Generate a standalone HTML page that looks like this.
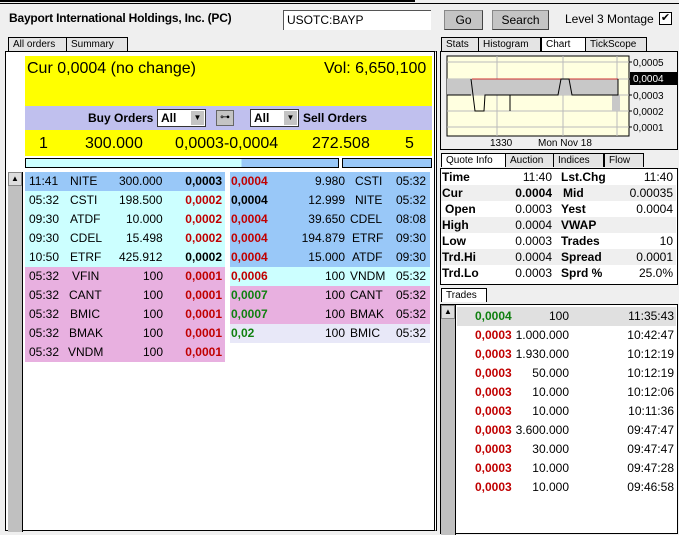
<!DOCTYPE html>
<html><head><meta charset="utf-8"><style>
*{margin:0;padding:0;box-sizing:border-box}
body{width:679px;height:528px;overflow:hidden;background:#efefef;font-family:"Liberation Sans",sans-serif;font-size:12px;color:#000;position:relative}
.a{position:absolute;white-space:nowrap}
.tab{position:absolute;height:14px;border:1px solid #000;border-bottom:none;background:#e4e4e4;font-size:10px;line-height:13px;padding-left:4px;overflow:hidden}
.row{position:absolute;height:19px;font-size:12px;line-height:19px}
.row span{position:absolute}
.r{color:#c00000;font-weight:bold}
.g{color:#108010;font-weight:bold}
.b{font-weight:bold}
.btn{position:absolute;background:#c4c4c4;border:1px solid #888;border-right-color:#444;border-bottom-color:#444;text-align:center;font-size:12px;line-height:18px}
.q{position:absolute;left:441px;width:235px;height:16px;font-size:12px;line-height:16px}
.q span{position:absolute}
.q .l{font-weight:bold;left:1px}
.tr{position:absolute;left:457px;width:219px;height:19px;line-height:19px}
.tr span{position:absolute}
</style></head><body>
<div class="a" style="left:0;top:0;width:415px;height:2px;background:#000"></div>
<div class="a" style="left:0;top:3px;width:679px;height:1px;background:#000"></div>
<div class="a b" style="left:9px;top:11px;font-size:12px;letter-spacing:-0.2px">Bayport International Holdings, Inc. (PC)</div>
<div class="a" style="left:283px;top:10px;width:148px;height:20px;background:#fff;border-top:1px solid #555;border-left:1px solid #555;padding-left:3px;line-height:18px">USOTC:BAYP</div>
<div class="btn" style="left:444px;top:10px;width:39px;height:20px">Go</div>
<div class="btn" style="left:492px;top:10px;width:57px;height:20px">Search</div>
<div class="a" style="left:565px;top:12px">Level 3 Montage</div>
<div class="a" style="left:659px;top:12px;width:13px;height:13px;background:#fff;border:1px solid #000;font-size:11px;line-height:11px;text-align:center">✔</div>

<div class="tab" style="left:8px;top:37px;width:60px">All orders</div>
<div class="tab" style="left:66px;top:37px;width:62px">Summary</div>
<div class="a" style="left:5px;top:51px;width:432px;height:480px;border:1px solid #000;background:#fff;border-right:3px double #000"></div>
<div class="a" style="left:25px;top:56px;width:407px;height:50px;background:#ffff00"></div>
<div class="a" style="left:27px;top:60px;font-size:16px">Cur 0,0004 (no change)</div>
<div class="a" style="left:324px;top:60px;font-size:16px">Vol: 6,650,100</div>
<div class="a" style="left:25px;top:106px;width:407px;height:24px;background:#c0c0ee"></div>
<div class="a b" style="left:88px;top:111px">Buy Orders</div>
<div class="a b" style="left:157px;top:109px;width:49px;height:18px;background:#fff;border:1px solid #333;padding-left:3px;line-height:16px">All<span style="position:absolute;right:1px;top:1px;width:13px;height:14px;background:#c4c4c4;font-size:8px;line-height:14px;text-align:center">▼</span></div>
<div class="a" style="left:216px;top:110px;width:18px;height:16px;background:#c4c4c4;border:1px solid #666;font-size:10px;line-height:14px;text-align:center">⊶</div>
<div class="a b" style="left:250px;top:109px;width:49px;height:18px;background:#fff;border:1px solid #333;padding-left:3px;line-height:16px">All<span style="position:absolute;right:1px;top:1px;width:13px;height:14px;background:#c4c4c4;font-size:8px;line-height:14px;text-align:center">▼</span></div>
<div class="a b" style="left:303px;top:111px">Sell Orders</div>
<div class="a" style="left:25px;top:130px;width:407px;height:26px;background:#ffff00;font-size:16px;line-height:28px">
<span class="a" style="left:14px">1</span><span class="a" style="left:60px">300.000</span><span class="a" style="left:150px">0,0003-0,0004</span><span class="a" style="left:287px">272.508</span><span class="a" style="left:380px">5</span></div>
<div class="a" style="left:25px;top:158px;width:314px;height:10px;border:1px solid #000;background:linear-gradient(90deg,#ccffff 0 69%,#99c8f8 69%)"></div>
<div class="a" style="left:342px;top:158px;width:90px;height:10px;border:1px solid #000;background:#99c8f8"></div>
<div class="a" style="left:8px;top:172px;width:15px;height:360px;background:#c0c0c0;border-right:1px solid #000"></div>
<div class="a" style="left:8px;top:172px;width:14px;height:14px;background:#ddd;border:1px solid #888;font-size:8px;line-height:12px;text-align:center">▲</div>

<div class="row" style="left:25px;top:172px;width:200px;background:#99c8f8"><span style="left:4px">11:41</span><span style="left:45px">NITE</span><span style="left:94px">300.000</span><span class="b" style="right:3px">0,0003</span></div>
<div class="row" style="left:25px;top:191px;width:200px;background:#ccffff"><span style="left:4px">05:32</span><span style="left:45px">CSTI</span><span style="left:94px">198.500</span><span class="r" style="right:3px">0,0002</span></div>
<div class="row" style="left:25px;top:210px;width:200px;background:#ccffff"><span style="left:4px">09:30</span><span style="left:45px">ATDF</span><span style="left:101px">10.000</span><span class="r" style="right:3px">0,0002</span></div>
<div class="row" style="left:25px;top:229px;width:200px;background:#ccffff"><span style="left:4px">09:30</span><span style="left:45px">CDEL</span><span style="left:101px">15.498</span><span class="r" style="right:3px">0,0002</span></div>
<div class="row" style="left:25px;top:248px;width:200px;background:#ccffff"><span style="left:4px">10:50</span><span style="left:45px">ETRF</span><span style="left:94px">425.912</span><span class="b" style="right:3px">0,0002</span></div>
<div class="row" style="left:25px;top:267px;width:200px;background:#e8b0e0"><span style="left:4px">05:32</span><span style="left:47px">VFIN</span><span style="left:118px">100</span><span class="r" style="right:3px">0,0001</span></div>
<div class="row" style="left:25px;top:286px;width:200px;background:#e8b0e0"><span style="left:4px">05:32</span><span style="left:44px">CANT</span><span style="left:118px">100</span><span class="r" style="right:3px">0,0001</span></div>
<div class="row" style="left:25px;top:305px;width:200px;background:#e8b0e0"><span style="left:4px">05:32</span><span style="left:45px">BMIC</span><span style="left:118px">100</span><span class="r" style="right:3px">0,0001</span></div>
<div class="row" style="left:25px;top:324px;width:200px;background:#e8b0e0"><span style="left:4px">05:32</span><span style="left:44px">BMAK</span><span style="left:118px">100</span><span class="r" style="right:3px">0,0001</span></div>
<div class="row" style="left:25px;top:343px;width:200px;background:#e8b0e0"><span style="left:4px">05:32</span><span style="left:43px">VNDM</span><span style="left:118px">100</span><span class="r" style="right:3px">0,0001</span></div>

<div class="row" style="left:230px;top:172px;width:200px;background:#99c8f8"><span class="r" style="left:1px">0,0004</span><span style="right:85px">9.980</span><span style="left:125px">CSTI</span><span style="right:4px">05:32</span></div>
<div class="row" style="left:230px;top:191px;width:200px;background:#99c8f8"><span class="b" style="left:1px">0,0004</span><span style="right:85px">12.999</span><span style="left:125px">NITE</span><span style="right:4px">05:32</span></div>
<div class="row" style="left:230px;top:210px;width:200px;background:#99c8f8"><span class="r" style="left:1px">0,0004</span><span style="right:85px">39.650</span><span style="left:120px">CDEL</span><span style="right:4px">08:08</span></div>
<div class="row" style="left:230px;top:229px;width:200px;background:#99c8f8"><span class="r" style="left:1px">0,0004</span><span style="right:85px">194.879</span><span style="left:122px">ETRF</span><span style="right:4px">09:30</span></div>
<div class="row" style="left:230px;top:248px;width:200px;background:#99c8f8"><span class="r" style="left:1px">0,0004</span><span style="right:85px">15.000</span><span style="left:122px">ATDF</span><span style="right:4px">09:30</span></div>
<div class="row" style="left:230px;top:267px;width:200px;background:#ccffff"><span class="r" style="left:1px">0,0006</span><span style="right:85px">100</span><span style="left:120px">VNDM</span><span style="right:4px">05:32</span></div>
<div class="row" style="left:230px;top:286px;width:200px;background:#e8b0e0"><span class="g" style="left:1px">0,0007</span><span style="right:85px">100</span><span style="left:120px">CANT</span><span style="right:4px">05:32</span></div>
<div class="row" style="left:230px;top:305px;width:200px;background:#e8b0e0"><span class="g" style="left:1px">0,0007</span><span style="right:85px">100</span><span style="left:120px">BMAK</span><span style="right:4px">05:32</span></div>
<div class="row" style="left:230px;top:324px;width:200px;background:#e8e8f8"><span class="g" style="left:1px">0,02</span><span style="right:85px">100</span><span style="left:120px">BMIC</span><span style="right:4px">05:32</span></div>

<div class="tab" style="left:441px;top:37px;width:38px">Stats</div>
<div class="tab" style="left:478px;top:37px;width:63px">Histogram</div>
<div class="tab" style="left:541px;top:37px;width:46px;background:#fff">Chart</div>
<div class="tab" style="left:585px;top:37px;width:62px">TickScope</div>
<div class="a" style="left:440px;top:51px;width:238px;height:99px;border:1px solid #000;background:#efefef"></div>
<svg class="a" style="left:440px;top:51px" width="238" height="99">
<rect x="7" y="5" width="182" height="80" fill="#ffffe0" stroke="#000"/>
<g stroke="#bbb"><line x1="7" y1="11" x2="189" y2="11"/><line x1="7" y1="28" x2="189" y2="28"/><line x1="7" y1="44" x2="189" y2="44"/><line x1="7" y1="60" x2="189" y2="60"/><line x1="7" y1="76" x2="189" y2="76"/><line x1="57" y1="5" x2="57" y2="85"/><line x1="123" y1="5" x2="123" y2="85"/><line x1="177" y1="5" x2="177" y2="85"/></g>
<rect x="7" y="28" width="171" height="16" fill="#c8c8c8"/>
<rect x="172" y="44" width="8" height="16" fill="#c8c8c8"/>
<line x1="32" y1="28" x2="178" y2="28" stroke="#d03030"/>
<path d="M7 44H31" fill="none" stroke="#000"/>
<path d="M31 28L35 60H44L45 44H118L121 28H129L132 44H178V28" fill="none" stroke="#000"/>
<path d="M70 44V60" stroke="#000"/>
<g stroke="#000"><line x1="189" y1="11" x2="192" y2="11"/><line x1="189" y1="28" x2="192" y2="28"/><line x1="189" y1="44" x2="192" y2="44"/><line x1="189" y1="60" x2="192" y2="60"/><line x1="189" y1="76" x2="192" y2="76"/></g>
<rect x="190" y="21" width="47" height="13" fill="#000"/>
<g font-family="Liberation Sans" font-size="10"><text x="193" y="15">0,0005</text><text x="193" y="31" fill="#fff">0,0004</text><text x="193" y="48">0,0003</text><text x="193" y="64">0,0002</text><text x="193" y="80">0,0001</text><text x="50" y="95">1330</text><text x="98" y="95">Mon Nov 18</text></g>
</svg>

<div class="tab" style="left:441px;top:153px;width:66px;background:#fff">Quote Info</div>
<div class="tab" style="left:505px;top:153px;width:50px">Auction</div>
<div class="tab" style="left:553px;top:153px;width:51px">Indices</div>
<div class="tab" style="left:604px;top:153px;width:40px">Flow</div>
<div class="a" style="left:440px;top:168px;width:238px;height:117px;border:1px solid #000;background:#fff"></div>
<div class="q" style="top:169px"><span class="l">Time</span><span style="right:124px">11:40</span><span class="b" style="left:120px">Lst.Chg</span><span style="right:3px">11:40</span></div>
<div class="q" style="top:185px;background:#efefef"><span class="l">Cur</span><span class="b" style="right:124px">0.0004</span><span class="b" style="left:122px">Mid</span><span style="right:3px">0.00035</span></div>
<div class="q" style="top:201px"><span class="l" style="left:4px">Open</span><span style="right:124px">0.0003</span><span class="b" style="left:120px">Yest</span><span style="right:3px">0.0004</span></div>
<div class="q" style="top:217px;background:#efefef"><span class="l">High</span><span style="right:124px">0.0004</span><span class="b" style="left:120px">VWAP</span></div>
<div class="q" style="top:233px"><span class="l">Low</span><span style="right:124px">0.0003</span><span class="b" style="left:120px">Trades</span><span style="right:3px">10</span></div>
<div class="q" style="top:249px;background:#efefef"><span class="l">Trd.Hi</span><span style="right:124px">0.0004</span><span class="b" style="left:120px">Spread</span><span style="right:3px">0.0001</span></div>
<div class="q" style="top:265px"><span class="l">Trd.Lo</span><span style="right:124px">0.0003</span><span class="b" style="left:120px">Sprd %</span><span style="right:3px">25.0%</span></div>

<div class="tab" style="left:441px;top:288px;width:46px;background:#fff">Trades</div>
<div class="a" style="left:440px;top:304px;width:238px;height:230px;border:1px solid #000;background:#fff"></div>
<div class="a" style="left:441px;top:305px;width:15px;height:230px;background:#c0c0c0;border-right:1px solid #000"></div>
<div class="a" style="left:441px;top:305px;width:14px;height:14px;background:#ddd;border:1px solid #888;font-size:8px;line-height:12px;text-align:center">▲</div>
<div class="tr" style="top:307px;background:#e0e0e0"><span class="g" style="left:18px">0,0004</span><span style="right:107px">100</span><span style="right:2px">11:35:43</span></div>
<div class="tr" style="top:326px"><span class="r" style="left:18px">0,0003</span><span style="right:107px">1.000.000</span><span style="right:2px">10:42:47</span></div>
<div class="tr" style="top:345px"><span class="r" style="left:18px">0,0003</span><span style="right:107px">1.930.000</span><span style="right:2px">10:12:19</span></div>
<div class="tr" style="top:364px"><span class="r" style="left:18px">0,0003</span><span style="right:107px">50.000</span><span style="right:2px">10:12:19</span></div>
<div class="tr" style="top:383px"><span class="r" style="left:18px">0,0003</span><span style="right:107px">10.000</span><span style="right:2px">10:12:06</span></div>
<div class="tr" style="top:402px"><span class="r" style="left:18px">0,0003</span><span style="right:107px">10.000</span><span style="right:2px">10:11:36</span></div>
<div class="tr" style="top:421px"><span class="r" style="left:18px">0,0003</span><span style="right:107px">3.600.000</span><span style="right:2px">09:47:47</span></div>
<div class="tr" style="top:440px"><span class="r" style="left:18px">0,0003</span><span style="right:107px">30.000</span><span style="right:2px">09:47:47</span></div>
<div class="tr" style="top:459px"><span class="r" style="left:18px">0,0003</span><span style="right:107px">10.000</span><span style="right:2px">09:47:28</span></div>
<div class="tr" style="top:478px"><span class="r" style="left:18px">0,0003</span><span style="right:107px">10.000</span><span style="right:2px">09:46:58</span></div>
</body></html>
